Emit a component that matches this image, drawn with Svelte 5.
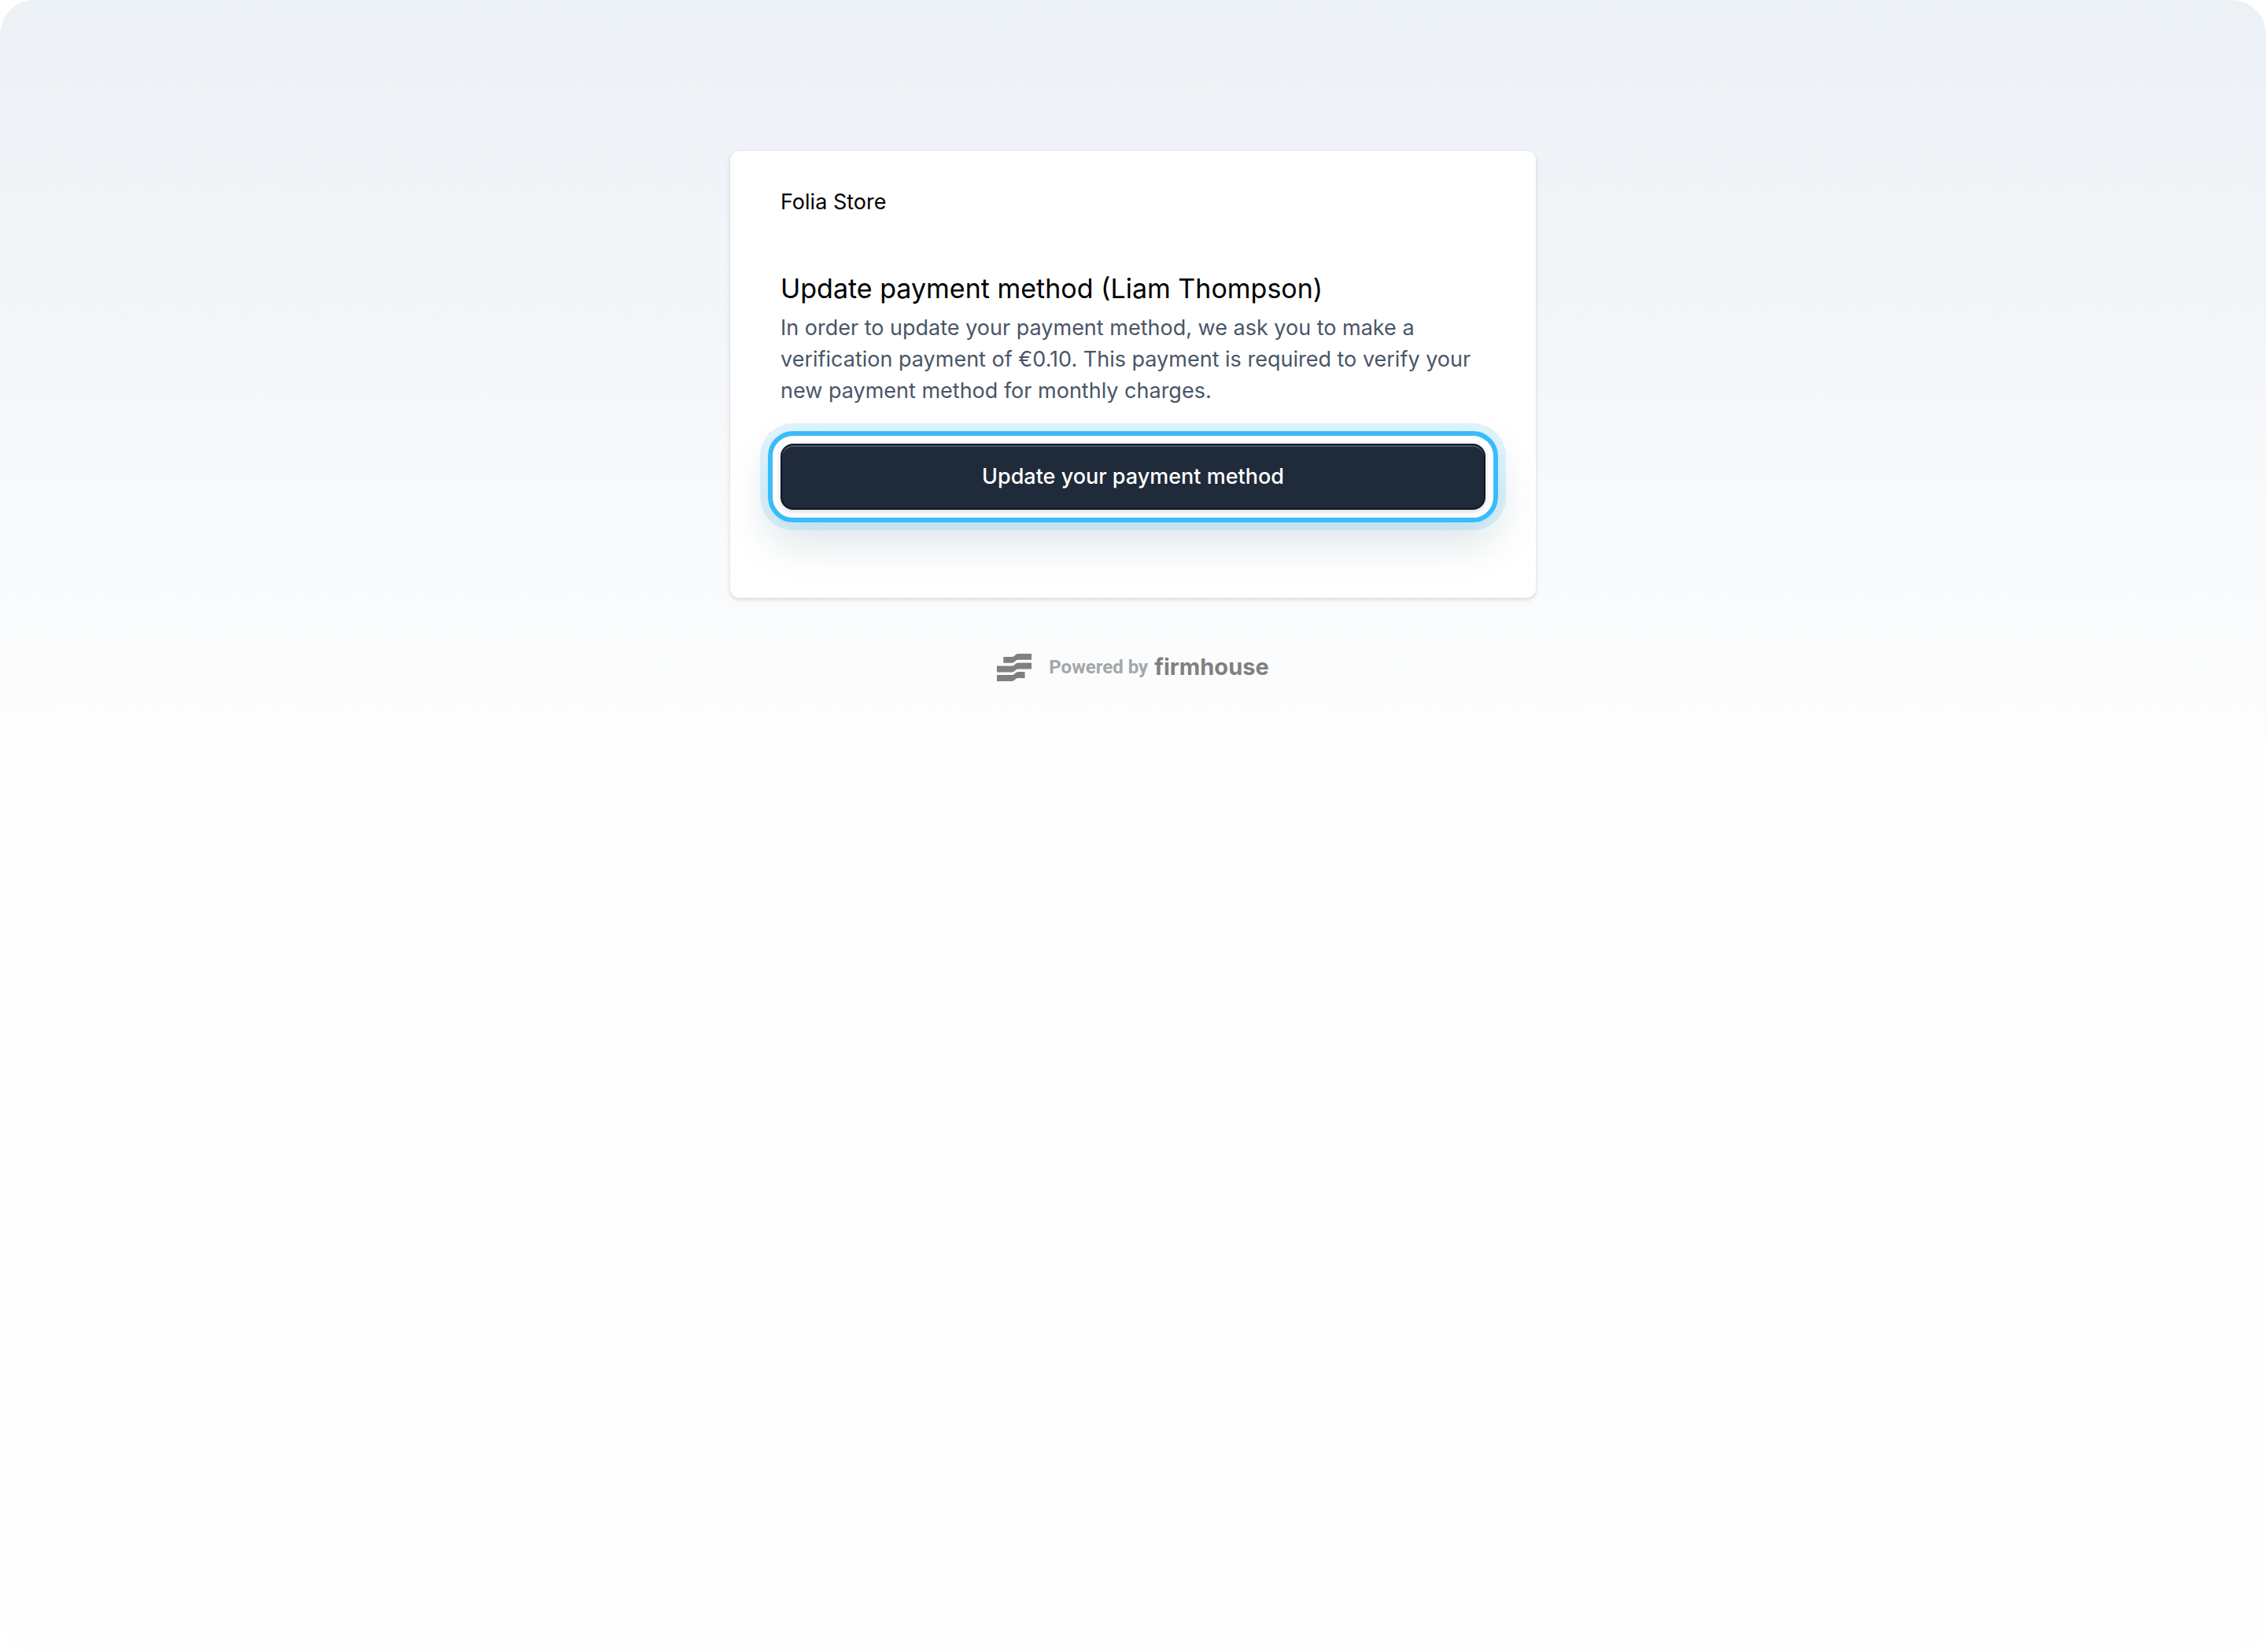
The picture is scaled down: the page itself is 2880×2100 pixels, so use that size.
<script>
	let { store = "Folia Store", customer = "Liam Thompson", amount = "€0.10" } = $props();
</script>

<div class="page">
	<main class="card">
		<p class="store">{store}</p>
		<h1>Update payment method ({customer})</h1>
		<p class="intro">
			In order to update your payment method, we ask you to make a verification payment of {amount}.
			This payment is required to verify your new payment method for monthly charges.
		</p>
		<button type="button">Update your payment method</button>
	</main>

	<footer>
		<svg viewBox="0 0 44 35" aria-hidden="true">
			<path d="M8.3 4H19q2 0 3-1l1-1q2-2 4-2h17v7.8H27q-2 0-3 1l-1 1q-2 2-4 2H8.3z" />
			<path d="M0 15.6h19q2 0 3-1l1-1q2-2 4-2h17v7.8H27q-2 0-3 1l-1 1q-2 2-4 2H0z" />
			<path d="M0 27h19q2 0 3-1l1-1q2-2 4-2h8.6v8H27q-2 0-3 1l-1 1q-2 2-4 2H0z" />
		</svg>
		<span class="powered">Powered by</span>
		<span class="brand">firmhouse</span>
	</footer>
</div>

<style>
	:global(body) {
		background: #fff;
	}

	.page {
		box-sizing: border-box;
		min-height: 100vh;
		padding: 192px 32px 64px;
		border-radius: 44px;
		background: #fefefe linear-gradient(#ecf1f6, #fefefe) no-repeat top / 100% 1000px;
		font-family: Inter, "Liberation Sans", sans-serif;
		font-size: 27px;
		line-height: 40px;
		color: #000;
	}

	.card {
		box-sizing: border-box;
		max-width: 1024px;
		margin: 0 auto;
		padding: 45px 64px 112px;
		border-radius: 12px;
		background: #fff;
		box-shadow:
			0 2px 6px rgba(0, 0, 0, 0.1),
			0 2px 4px rgba(0, 0, 0, 0.06);
	}

	p,
	h1 {
		margin: 0;
	}

	h1 {
		margin: 64px 0 4px;
		font-size: 34px;
		font-weight: 400;
		line-height: 52px;
	}

	.intro {
		color: #4a5568;
	}

	button {
		position: relative;
		display: block;
		width: 100%;
		height: 84px;
		margin-top: 47px;
		border: 2px solid #0f172a;
		border-radius: 16px;
		background: #1f2a3a;
		box-shadow:
			inset 0 2px 0 rgba(255, 255, 255, 0.2),
			0 2px 6px rgba(0, 0, 0, 0.16);
		color: #fff;
		font: inherit;
		font-weight: 500;
		cursor: pointer;
	}

	/* highlight ring around the button */
	button::after {
		content: "";
		position: absolute;
		inset: -18px;
		border: 6px solid #38bdf8;
		border-radius: 32px;
		box-shadow:
			0 0 0 10px rgba(56, 189, 248, 0.16),
			0 26px 52px rgba(15, 80, 100, 0.15);
		pointer-events: none;
	}

	footer {
		display: flex;
		align-items: center;
		justify-content: center;
		margin-top: 68px;
	}

	svg {
		width: 44px;
		height: 35px;
		margin-right: 22px;
		fill: #808080;
	}

	.powered {
		margin-right: 8px;
		font-family: Roboto, sans-serif;
		font-size: 24px;
		font-weight: 700;
		color: #a3a7aa;
	}

	.brand {
		font-size: 29px;
		font-weight: 700;
		color: #808080;
	}
</style>
